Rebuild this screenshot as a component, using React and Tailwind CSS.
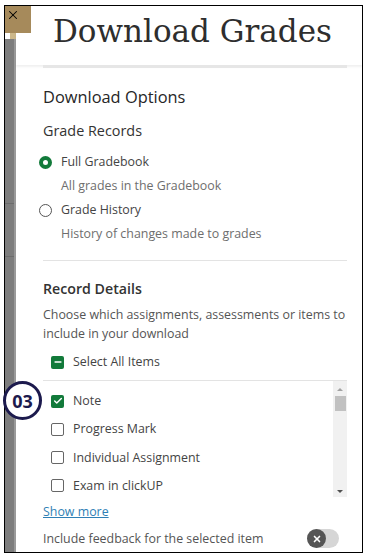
import { Check, Minus, X } from "lucide-react";

const sans = { fontFamily: '"Open Sans", "Noto Sans", sans-serif' };

function Radio({ checked }) {
  return checked ? (
    <span className="block h-[13px] w-[13px] rounded-full border-[4px] border-[#127a3a] bg-white" />
  ) : (
    <span className="block h-[13px] w-[13px] rounded-full border-[1.5px] border-[#555] bg-white" />
  );
}

function Box({ checked }) {
  if (checked)
    return (
      <span className="flex h-[13px] w-[13px] items-center justify-center rounded-[2px] bg-[#127a3a]">
        <Check size={10} strokeWidth={3.5} className="text-white" />
      </span>
    );
  return <span className="block h-[13px] w-[13px] rounded-[2px] border-[1.5px] border-[#666] bg-white" />;
}

const items = [
  { label: "Note", checked: true },
  { label: "Progress Mark" },
  { label: "Individual Assignment" },
  { label: "Exam in clickUP" },
];

export default function App() {
  return (
    <div className="h-[557px] w-[368px] bg-white pl-[4px] pt-[5px]" style={sans}>
      <div className="relative flex h-[548px] w-[359px] border border-black">
        {/* page behind, peeking out */}
        <div className="flex w-[11px] flex-col">
          <div className="h-[27px] w-[11px]" />
          <div className="flex h-[6px]">
            <div className="w-[5px] bg-white" />
            <div className="w-[6px] bg-[#cdb88a]" />
          </div>
          <div className="flex flex-1 flex-col bg-[#7d7d7d] border-r-2 border-[#9a9a9a]">
            <div className="h-[165px] border-b border-[#6c6c6c]" />
            <div className="h-[53px] border-b border-[#6c6c6c]" />
          </div>
        </div>
        <div className="absolute left-0 top-0 flex h-[27px] w-[26px] items-start bg-[#a68a5b] pl-[1px] pt-[2px]">
          <X size={14} strokeWidth={1.8} className="text-black" />
        </div>

        {/* panel */}
        <div className="flex flex-1 flex-col">
          <div className="flex h-[59px] items-center pb-[8px] pl-[37px] shadow-[0_2px_2px_rgba(0,0,0,0.06)]">
            <h1
              className="text-[31px] leading-none text-[#2e2e2e]"
              style={{ fontFamily: '"DejaVu Serif", serif' }}
            >
              Download Grades
            </h1>
          </div>
          <div className="ml-[27px] mr-[15px] h-[3px] bg-[#e6e6e6]" />

          <div className="flex flex-1 flex-col pl-[27px] pr-[15px]">
            <h2 className="mt-[18px] text-[16.4px] leading-[22px] text-[#262626]">Download Options</h2>
            <h3 className="mt-[13px] text-[14.4px] leading-[20px] text-[#333]">Grade Records</h3>

            <div className="mt-[12px] flex items-center gap-[9px] -ml-[4px]">
              <Radio checked />
              <span className="text-[12.4px] leading-[18px] text-[#444]">Full Gradebook</span>
            </div>
            <p className="ml-[18px] mt-[6px] text-[12.4px] leading-[18px] text-[#6e6e6e]">All grades in the Gradebook</p>
            <div className="mt-[6px] flex items-center gap-[9px] -ml-[4px]">
              <Radio />
              <span className="text-[12.4px] leading-[18px] text-[#444]">Grade History</span>
            </div>
            <p className="ml-[18px] mt-[6px] text-[12.4px] leading-[18px] text-[#6e6e6e]">History of changes made to grades</p>

            <div className="mt-[17px] h-[1px] bg-[#e3e3e3]" />

            <h3 className="mt-[18px] text-[14.2px] font-semibold leading-[20px] text-[#333]">Record Details</h3>
            <p className="mt-[6px] text-[12.4px] leading-[19px] text-[#555]">
              Choose which assignments, assessments or items to include in your download
            </p>
            <div className="mt-[10px] flex items-center gap-[9px] pl-[8px]">
              <span className="flex h-[13px] w-[13px] items-center justify-center rounded-[2px] bg-[#127a3a]">
                <Minus size={10} strokeWidth={3.5} className="text-white" />
              </span>
              <span className="text-[12.4px] leading-[18px] text-[#444]">Select All Items</span>
            </div>

            <div className="mt-[9px] flex h-[117px] border-t border-[#e3e3e3]">
              <div className="flex flex-1 flex-col gap-[10.3px] pl-[8px] pt-[11px]">
                {items.map((it) => (
                  <div key={it.label} className="flex items-center gap-[9px]">
                    <Box checked={it.checked} />
                    <span className="text-[12.4px] leading-[18px] text-[#444]">{it.label}</span>
                  </div>
                ))}
              </div>
              <div className="flex w-[14px] flex-col items-center bg-[#f1f1f1] pt-[7px] pb-[4px]">
                <span className="h-0 w-0 border-x-[3px] border-b-[3px] border-x-transparent border-b-[#a3a3a3]" />
                <span className="mt-[5px] h-[15px] w-[11px] bg-[#c1c1c1]" />
                <span className="mt-auto h-0 w-0 border-x-[3px] border-t-[3px] border-x-transparent border-t-[#505050]" />
              </div>
            </div>

            <a className="mt-[6px] w-fit text-[12.4px] leading-[18px] text-[#2f7fb5] underline">Show more</a>

            <div className="mt-[8px] flex items-center justify-between pr-[8px]">
              <span className="text-[12.4px] leading-[18px] text-[#555]">Include feedback for the selected item</span>
              <span className="flex h-[19px] w-[32px] items-center rounded-full bg-[#d6d6d6]">
                <span className="flex h-[19px] w-[19px] items-center justify-center rounded-full bg-[#555]">
                  <X size={10} strokeWidth={4} className="text-white" />
                </span>
              </span>
            </div>
          </div>
        </div>

        {/* step badge */}
        <div className="absolute left-[-2px] top-[375px] flex h-[39px] w-[39px] items-center justify-center rounded-full border-[3px] border-[#1c1a4d] bg-white">
          <span className="text-[18px] font-bold leading-none text-[#1c1a4d]">03</span>
        </div>
      </div>
    </div>
  );
}
